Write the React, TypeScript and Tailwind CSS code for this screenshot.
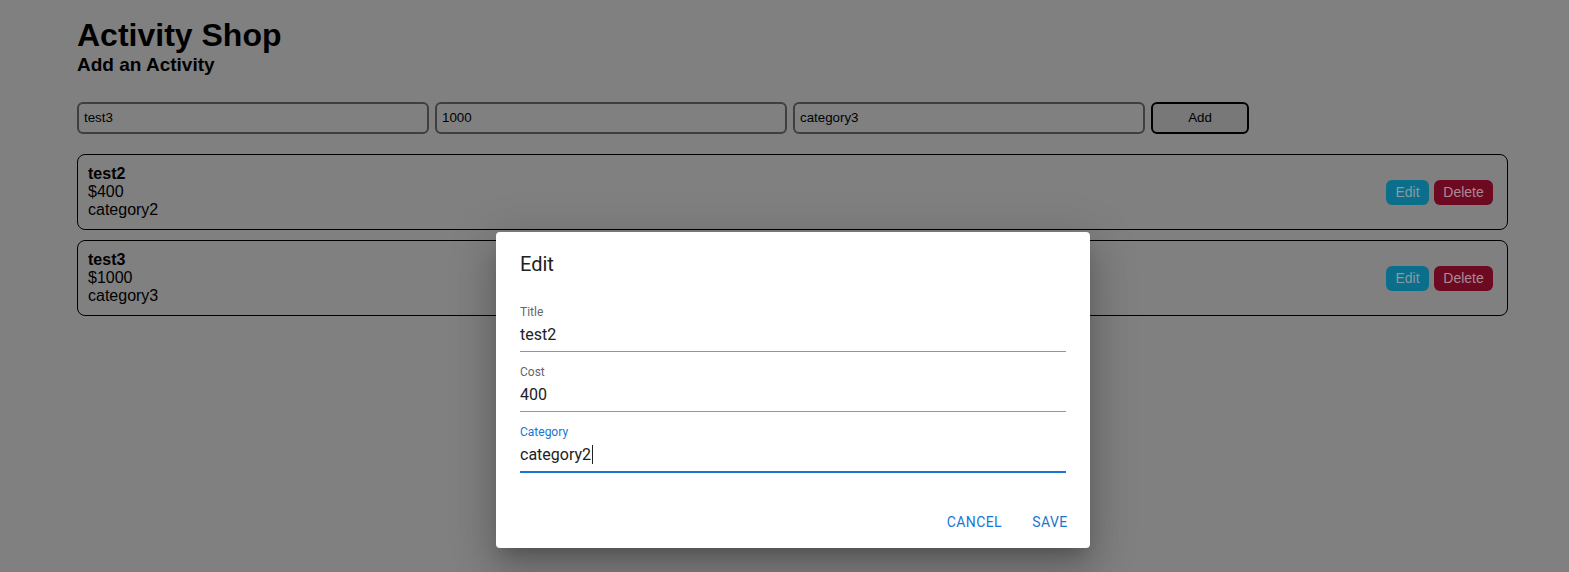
import React from "react";

const activities = [
  { title: "test2", cost: 400, category: "category2" },
  { title: "test3", cost: 1000, category: "category3" },
];

function Field({
  label,
  value,
  focused = false,
}: {
  label: string;
  value: string;
  focused?: boolean;
}) {
  return (
    <div className="mt-2 mb-1 h-12 flex flex-col">
      <label
        className={`text-[12px] leading-[17px] ${
          focused ? "text-[#1976d2]" : "text-[#666666]"
        }`}
      >
        {label}
      </label>
      <div
        className={`mt-[-2px] pt-[4px] pb-[5px] flex-1 flex items-center text-[16px] leading-[23px] text-[#212121] ${
          focused ? "border-b-2 border-[#1976d2]" : "border-b border-[#949494]"
        }`}
      >
        <span>{value}</span>
        {focused && <span className="ml-px w-px h-[19px] bg-[#212121]" />}
      </div>
    </div>
  );
}

export default function App() {
  return (
    <div
      className="relative min-h-[572px] bg-[#808080] text-black overflow-hidden"
      style={{ fontFamily: '"Liberation Sans", Arial, sans-serif' }}
    >
      <div className="pl-[77px] pr-[61px] pt-[17px]">
        <h1 className="text-[32px] font-bold leading-[37px]">Activity Shop</h1>
        <h2 className="text-[19px] font-bold leading-[22px]">
          Add an Activity
        </h2>

        <div className="mt-[26px] flex gap-[6px]">
          {["test3", "1000", "category3"].map((v) => (
            <div
              key={v}
              className="w-[352px] h-8 border-2 border-[#3f3f3f] rounded-[6px] px-[5px] flex items-center text-[13.33px] text-black"
            >
              {v}
            </div>
          ))}
          <button className="w-[98px] h-8 border-2 border-black rounded-[6px] bg-[#787878] text-[13.33px] text-black">
            Add
          </button>
        </div>

        <div className="mt-5 flex flex-col gap-[10px]">
          {activities.map((a) => (
            <div
              key={a.title}
              className="border border-black rounded-[8px] px-[10px] py-[10px] flex items-center justify-between"
            >
              <div className="text-[16px] leading-[18px]">
                <div className="font-bold">{a.title}</div>
                <div>${a.cost}</div>
                <div>{a.category}</div>
              </div>
              <div className="flex gap-[5px] mr-[4px] mt-[1px]">
                <button className="w-[43px] h-[25px] rounded-[6px] bg-[#0b6f8c] text-[#8a9aa2] text-[14px]">
                  Edit
                </button>
                <button className="w-[59px] h-[25px] rounded-[6px] bg-[#6d0a22] text-[#ab8a94] text-[14px]">
                  Delete
                </button>
              </div>
            </div>
          ))}
        </div>
      </div>

      <div
        className="absolute left-[496px] top-[232px] w-[594px] bg-white rounded-[4px] shadow-[0_11px_15px_-7px_rgba(0,0,0,0.2),0_24px_38px_3px_rgba(0,0,0,0.14),0_9px_46px_8px_rgba(0,0,0,0.12)]"
        style={{ fontFamily: 'Roboto, "Liberation Sans", sans-serif' }}
      >
        <div className="px-6 py-4 text-[20px] leading-8 text-[#212121]">
          Edit
        </div>
        <div className="px-6 pb-5 flex flex-col">
          <Field label="Title" value="test2" />
          <Field label="Cost" value="400" />
          <Field label="Category" value="category2" focused />
        </div>
        <div className="p-2 flex justify-end gap-2">
          <button className="min-w-16 h-[36px] px-2 text-[14px] tracking-[0.4px] uppercase text-[#1976d2]">
            Cancel
          </button>
          <button className="min-w-16 h-[36px] px-2 text-[14px] tracking-[0.4px] uppercase text-[#1976d2]">
            Save
          </button>
        </div>
      </div>
    </div>
  );
}
